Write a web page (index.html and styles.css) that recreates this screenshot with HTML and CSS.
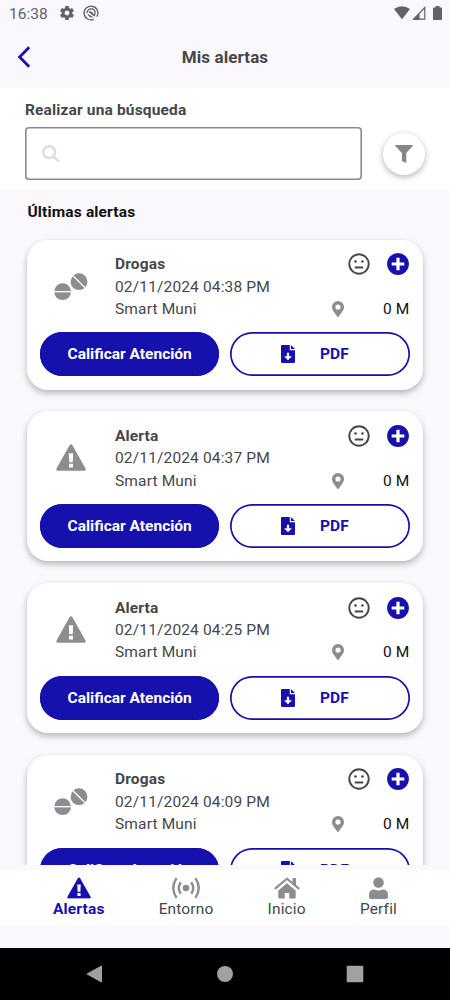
FILE: index.html
```html
<!DOCTYPE html>
<html lang="es">

<head>
  <meta charset="UTF-8" />
  <meta name="viewport" content="width=device-width, initial-scale=1.0" />
  <title>Mis alertas</title>
  <link rel="stylesheet" href="styles.css">
</head>

<body>
  <!-- Shared icons -->
  <svg class="sprite" aria-hidden="true">
    <symbol id="pills" viewBox="0 0 34 28">
      <circle cx="8.6" cy="18.7" r="8.4" fill="#8b8d90" />
      <path d="M0 18.7h17.2" stroke="#fff" stroke-width="1.3" />
      <circle cx="25" cy="8.7" r="8.4" fill="#8b8d90" />
      <path d="M19 2.7l12 12" stroke="#fff" stroke-width="1.3" />
    </symbol>
    <symbol id="warning" viewBox="0 0 30 27">
      <path d="M15 1.8L28.2 25.2H1.8z" fill="currentColor" stroke="currentColor" stroke-width="3" stroke-linejoin="round" />
      <path d="M12.8 9.2h4.4l-.5 9h-3.4zM13 19.8h4v3.8h-4z" fill="#fff" />
    </symbol>
    <symbol id="neutral" viewBox="0 0 24 24">
      <circle cx="12" cy="12" r="10.6" fill="none" stroke="currentColor" stroke-width="2.1" />
      <circle cx="8.2" cy="9.3" r="1.4" />
      <circle cx="15.8" cy="9.3" r="1.4" />
      <path d="M7.4 15.8h9.2" stroke="currentColor" stroke-width="2.2" />
    </symbol>
    <symbol id="plus" viewBox="0 0 22 22">
      <circle cx="11" cy="11" r="10.9" />
      <path d="M11 4.7v12.6M4.7 11h12.6" stroke="#fff" stroke-width="3.2" />
    </symbol>
    <symbol id="pin" viewBox="0 0 12 16">
      <path fill-rule="evenodd" d="M6 0a6 6 0 0 0-6 6c0 2.7 1.1 3.6 5.2 9.6a1 1 0 0 0 1.6 0C10.9 9.6 12 8.7 12 6A6 6 0 0 0 6 0zm0 3.4a2.6 2.6 0 1 1 0 5.2 2.6 2.6 0 0 1 0-5.2z" />
    </symbol>
    <symbol id="file" viewBox="0 0 14 18">
      <path d="M1 0h7.8v5.2H14V17a1 1 0 0 1-1 1H1a1 1 0 0 1-1-1V1a1 1 0 0 1 1-1zM9.9 0L14 4.1H9.9z" />
      <path d="M5.9 7.8h2.2v3.4h2.8L7 15.3l-3.9-4.1h2.8z" fill="#fff" />
    </symbol>
  </svg>

  <!-- Status bar -->
  <div class="status">
    <span class="time">16:38</span>
    <svg class="gear" viewBox="2 2 20 20" width="14" height="14">
      <path fill-rule="evenodd" d="M19.43 12.98c.04-.32.07-.64.07-.98s-.03-.66-.07-.98l2.11-1.65c.19-.15.24-.42.12-.64l-2-3.46c-.12-.22-.39-.3-.61-.22l-2.49 1c-.52-.4-1.08-.73-1.69-.98l-.38-2.65A.49.49 0 0 0 14 2h-4c-.25 0-.46.18-.49.42l-.38 2.65c-.61.25-1.17.59-1.69.98l-2.49-1c-.23-.09-.49 0-.61.22l-2 3.46c-.13.22-.07.49.12.64l2.11 1.65c-.04.32-.07.65-.07.98s.03.66.07.98l-2.11 1.65c-.19.15-.24.42-.12.64l2 3.46c.12.22.39.3.61.22l2.49-1c.52.4 1.08.73 1.69.98l.38 2.65c.03.24.24.42.49.42h4c.25 0 .46-.18.49-.42l.38-2.65c.61-.25 1.17-.59 1.69-.98l2.49 1c.23.09.49 0 .61-.22l2-3.46c.12-.22.07-.49-.12-.64zM12 15.5a3.5 3.5 0 1 1 0-7 3.5 3.5 0 0 1 0 7z" />
    </svg>
    <svg viewBox="0 0 16 16" width="16" height="16">
      <path d="M10.8 14.3A6.9 6.9 0 1 1 13.8 11.7" fill="none" stroke="currentColor" stroke-width="1.3" />
      <path d="M4 8A4.1 4.1 0 1 1 11.5 10.2" fill="none" stroke="currentColor" stroke-width="1.3" />
      <path d="M5.4 6.9Q7.6 5.6 9.4 7.4L12.6 11.3 10.8 11.3z" />
      <path d="M4.3 8.4l6 3.9Q6.2 13.6 4.3 8.4z" />
    </svg>
    <div class="signals">
      <svg viewBox="0 0 16 14" width="16" height="14"><path d="M0 3.1Q8-2.7 16 3.1L8 13.2z" /></svg>
      <svg viewBox="0 0 14 14" width="14" height="14">
        <path d="M1.6 13.2L12.8 1.6v11.6z" fill="none" stroke="currentColor" stroke-width="1.2" />
        <path d="M.7 13.7L7.5 7v6.7z" />
      </svg>
      <svg class="battery" viewBox="0 0 9 14" width="9" height="14"><path d="M2.5 0h4v1.4H8a1 1 0 0 1 1 1V13a1 1 0 0 1-1 1H1a1 1 0 0 1-1-1V2.4a1 1 0 0 1 1-1h1.5z" /></svg>
    </div>
  </div>

  <header class="header">
    <svg class="back" viewBox="0 0 14 22" width="14" height="22"><path d="M12.2 1.2L2.6 11l9.6 9.8" /></svg>
    <h1>Mis alertas</h1>
  </header>

  <!-- Search -->
  <section class="search">
    <label for="q">Realizar una búsqueda</label>
    <div class="search-row">
      <div class="field">
        <svg viewBox="0 0 18 18" width="18" height="18"><circle cx="7.2" cy="7.2" r="5.9" /><path d="M11.5 11.5l5.5 5.2" /></svg>
        <input type="text" id="q" />
      </div>
      <button class="filter" aria-label="Filtrar">
        <svg viewBox="0 0 18 18" width="18" height="18"><path d="M.5 0h17q.7.5 0 1.3L11.3 8v9.2q-.2.9-1 .5L6.9 16V8L.5 1.3Q-.2.5.5 0z" /></svg>
      </button>
    </div>
  </section>

  <main class="list">
    <h2>Últimas alertas</h2>

    <article class="card">
      <div class="info">
        <div class="type"><svg class="pills"><use href="#pills" /></svg></div>
        <div class="lines">
          <div class="line"><strong>Drogas</strong><svg class="face"><use href="#neutral" /></svg><svg class="more"><use href="#plus" /></svg></div>
          <div class="line">02/11/2024 04:38 PM</div>
          <div class="line">Smart Muni<svg class="pin"><use href="#pin" /></svg><span class="distance">0 M</span></div>
        </div>
      </div>
      <div class="actions">
        <button class="rate">Calificar Atención</button>
        <button class="pdf"><svg><use href="#file" /></svg>PDF</button>
      </div>
    </article>

    <article class="card">
      <div class="info">
        <div class="type"><svg class="warning"><use href="#warning" /></svg></div>
        <div class="lines">
          <div class="line"><strong>Alerta</strong><svg class="face"><use href="#neutral" /></svg><svg class="more"><use href="#plus" /></svg></div>
          <div class="line">02/11/2024 04:37 PM</div>
          <div class="line">Smart Muni<svg class="pin"><use href="#pin" /></svg><span class="distance">0 M</span></div>
        </div>
      </div>
      <div class="actions">
        <button class="rate">Calificar Atención</button>
        <button class="pdf"><svg><use href="#file" /></svg>PDF</button>
      </div>
    </article>

    <article class="card">
      <div class="info">
        <div class="type"><svg class="warning"><use href="#warning" /></svg></div>
        <div class="lines">
          <div class="line"><strong>Alerta</strong><svg class="face"><use href="#neutral" /></svg><svg class="more"><use href="#plus" /></svg></div>
          <div class="line">02/11/2024 04:25 PM</div>
          <div class="line">Smart Muni<svg class="pin"><use href="#pin" /></svg><span class="distance">0 M</span></div>
        </div>
      </div>
      <div class="actions">
        <button class="rate">Calificar Atención</button>
        <button class="pdf"><svg><use href="#file" /></svg>PDF</button>
      </div>
    </article>

    <article class="card">
      <div class="info">
        <div class="type"><svg class="pills"><use href="#pills" /></svg></div>
        <div class="lines">
          <div class="line"><strong>Drogas</strong><svg class="face"><use href="#neutral" /></svg><svg class="more"><use href="#plus" /></svg></div>
          <div class="line">02/11/2024 04:09 PM</div>
          <div class="line">Smart Muni<svg class="pin"><use href="#pin" /></svg><span class="distance">0 M</span></div>
        </div>
      </div>
      <div class="actions">
        <button class="rate">Calificar Atención</button>
        <button class="pdf"><svg><use href="#file" /></svg>PDF</button>
      </div>
    </article>
  </main>

  <!-- Bottom tabs -->
  <nav class="tabs">
    <a class="tab active">
      <svg viewBox="0 0 30 27" width="24" height="22"><use href="#warning" /></svg>
      <span>Alertas</span>
    </a>
    <a class="tab">
      <svg class="waves" viewBox="0 0 28 22" width="28" height="22">
        <circle cx="14" cy="11" r="3.3" />
        <path d="M8.8 5.2q-4 5.8 0 11.6M19.2 5.2q4 5.8 0 11.6M4.5 1.2q-6.5 9.8 0 19.6M23.5 1.2q6.5 9.8 0 19.6" />
      </svg>
      <span>Entorno</span>
    </a>
    <a class="tab">
      <svg viewBox="0 0 26 22" width="26" height="22">
        <path d="M13 6.2L21.7 13.5V20.5q0 1-1 1h-5.4v-5.5h-4.6v5.5H5.3q-1 0-1-1V13.5z" />
        <path d="M1.4 11.4L13 1.7l11.6 9.7" fill="none" stroke="currentColor" stroke-width="2.1" stroke-linecap="round" stroke-linejoin="round" />
        <path d="M18.5 1H22v8l-3.5-3z" />
      </svg>
      <span>Inicio</span>
    </a>
    <a class="tab">
      <svg viewBox="0 0 19 22" width="19" height="22">
        <circle cx="9.5" cy="5.5" r="5.3" />
        <path d="M5.5 12.5q4 1.8 8 0Q19 12.3 19 18v2q0 2-2 2H2q-2 0-2-2v-2q0-5.7 5.5-5.5z" />
      </svg>
      <span>Perfil</span>
    </a>
  </nav>

  <!-- System navigation -->
  <div class="system">
    <svg viewBox="0 0 18 18" width="18" height="18"><path d="M15.5 1v16L1 9z" stroke="currentColor" stroke-linejoin="round" /></svg>
    <svg viewBox="0 0 18 18" width="18" height="18"><circle cx="9" cy="9" r="8" /></svg>
    <svg viewBox="0 0 18 18" width="18" height="18"><rect x=".7" y=".7" width="16.6" height="16.6" rx="1" /></svg>
  </div>
</body>

</html>
```

FILE: styles.css
```css
* {
  box-sizing: border-box;
}

body {
  margin: 0;
  height: 1000px;
  display: flex;
  flex-direction: column;
  overflow: hidden;
  background: #faf8fc;
  color: #45474b;
  font-family: Roboto, sans-serif;
  font-size: 15.5px;
  letter-spacing: 0.15px;
}

svg {
  display: block;
  flex: none;
  fill: currentColor;
}

.sprite {
  position: absolute;
  width: 0;
  height: 0;
}

h1,
h2 {
  margin: 0;
}

button {
  padding: 0;
  font: inherit;
  letter-spacing: inherit;
}

/* Status bar */
.status {
  display: flex;
  align-items: center;
  height: 26px;
  padding: 0 8px 0 9px;
  color: #626166;
}

.time {
  width: 51px;
  padding-top: 1px;
  font-size: 15.5px;
  letter-spacing: 0;
}

.gear {
  margin-right: 9px;
}

.signals {
  display: flex;
  margin-left: auto;
  gap: 2px;
}

.battery {
  margin-left: 5px;
}

/* Header */
.header {
  display: flex;
  align-items: center;
  height: 62px;
  padding: 0 31px 1px 17px;
}

.header h1 {
  flex: 1;
  text-align: center;
  font-size: 17px;
  font-weight: 700;
  letter-spacing: 0.1px;
}

.back {
  fill: none;
  stroke: #1610ad;
  stroke-width: 2.8;
}

/* Search */
.search {
  height: 102px;
  padding: 11px 25px 0;
  background: #fff;
}

.search label {
  display: block;
  height: 28px;
  line-height: 22px;
  font-weight: 700;
}

.search-row {
  display: flex;
  align-items: center;
  justify-content: space-between;
}

.field {
  display: flex;
  align-items: center;
  width: 337px;
  height: 53px;
  padding: 0 17px;
  border-radius: 4px;
  box-shadow: inset 0 0 0 1.6px #8a898d;
}

.field svg {
  fill: none;
  stroke: #dcdbdd;
  stroke-width: 2.4;
}

.field input {
  flex: 1;
  border: 0;
  outline: 0;
  background: none;
}

.filter {
  display: flex;
  align-items: center;
  justify-content: center;
  width: 42px;
  height: 42px;
  border: 0;
  border-radius: 50%;
  background: #fff;
  color: #85868a;
  box-shadow: 0 2px 6px rgba(0, 0, 0, 0.3);
}

/* Alert list */
.list {
  height: 675px;
  padding: 0 27px;
  overflow: hidden;
}

.list h2 {
  height: 49.5px;
  padding: 11px 0 0 0.5px;
  line-height: 22px;
  color: #111;
  font-size: 15.5px;
  font-weight: 700;
}

.card {
  height: 150px;
  margin-bottom: 21.7px;
  padding: 13.6px 13.5px 13px 13px;
  border-radius: 21px;
  background: #fff;
  box-shadow: 0 3px 6px rgba(0, 0, 0, 0.28);
}

.info {
  display: flex;
  height: 79.4px;
}

.type {
  width: 75px;
  padding: 19.5px 0 0 13.5px;
  color: #8b8d90;
}

.pills {
  width: 34px;
  height: 28px;
}

.warning {
  width: 30px;
  height: 27px;
  margin-left: 2px;
}

.lines {
  flex: 1;
}

.line {
  display: flex;
  align-items: center;
  height: 22.3px;
}

.line strong {
  font-weight: 700;
}

.face {
  width: 22px;
  height: 22px;
  margin-left: auto;
}

.more {
  width: 22px;
  height: 22px;
  margin: 0 0.5px 0 17px;
  color: #1610ad;
}

.pin {
  width: 12px;
  height: 16px;
  margin-left: auto;
  color: #8b8d90;
}

.distance {
  width: 65.5px;
  text-align: right;
  color: #111;
}

/* Card buttons */
.actions {
  display: flex;
  justify-content: space-between;
}

.actions button {
  width: 179.3px;
  height: 44px;
  border: 0;
  border-radius: 22px;
  box-shadow: inset 0 0 0 1.7px #1610ad;
  font-weight: 700;
  letter-spacing: 0;
}

.actions .rate {
  background: #1610ad;
  color: #fff;
}

.actions .pdf {
  display: flex;
  align-items: center;
  justify-content: center;
  gap: 25px;
  padding-right: 10px;
  background: #fff;
  color: #1610ad;
}

.pdf svg {
  width: 14px;
  height: 18px;
}

/* Bottom tabs */
.tabs {
  display: flex;
  justify-content: space-between;
  height: 56px;
  margin-top: 5px;
  padding: 7px 53px 0;
  background: #fff;
}

.tab {
  display: flex;
  flex-direction: column;
  align-items: center;
  line-height: 20px;
}

.tab svg {
  color: #8b8d90;
}

.tab.active,
.tab.active svg {
  color: #1610ad;
  font-weight: 700;
}

.waves path {
  fill: none;
  stroke: currentColor;
  stroke-width: 2.4;
}

/* System navigation */
.system {
  display: flex;
  align-items: center;
  justify-content: space-between;
  height: 52px;
  margin-top: auto;
  padding: 0 86px;
  background: #000;
  color: #a3a0a5;
}
```
